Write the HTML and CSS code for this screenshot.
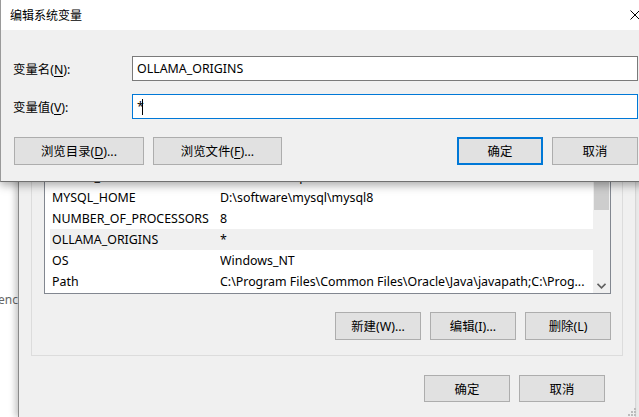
FILE: index.html
```html
<!DOCTYPE html>
<html lang="zh-CN">
<head>
<meta charset="utf-8">
<title>编辑系统变量</title>
<link rel="stylesheet" href="styles.css">
</head>
<body>
<div class="desktop">
  <div class="behind"><span class="behind-text">enc</span></div>
  <div class="envwin">
    <div class="group">
      <div class="list">
        <div class="rows">
          <div class="row"><span class="name">JAVA_HOME</span><span class="val">C:\Program Files\Java\jdk1.8.0</span></div>
          <div class="row"><span class="name">MAVEN_HOME</span><span class="val">D:\software\apache-maven</span></div>
          <div class="row"><span class="name">MYSQL_HOME</span><span class="val">D:\software\mysql\mysql8</span></div>
          <div class="row"><span class="name">NUMBER_OF_PROCESSORS</span><span class="val">8</span></div>
          <div class="row sel"><span class="name">OLLAMA_ORIGINS</span><span class="val">*</span></div>
          <div class="row"><span class="name">OS</span><span class="val">Windows_NT</span></div>
          <div class="row"><span class="name">Path</span><span class="val">C:\Program Files\Common Files\Oracle\Java\javapath;C:\Prog...</span></div>
        </div>
        <div class="scrollbar">
          <div class="sb-btn"></div>
          <div class="thumb"></div>
          <div class="track"></div>
          <div class="sb-btn">
            <svg width="9" height="6" viewBox="0 0 9 6"><path d="M0.5 0.8 L4.5 4.8 L8.5 0.8" fill="none" stroke="#606060" stroke-width="1.6"/></svg>
          </div>
        </div>
      </div>
      <div class="btnrow">
        <button class="btn">新建(W)...</button>
        <button class="btn">编辑(I)...</button>
        <button class="btn">删除(L)</button>
      </div>
    </div>
    <div class="footer">
      <button class="btn">确定</button>
      <button class="btn">取消</button>
    </div>
  </div>
  <div class="rest"></div>

  <svg class="grip" width="9" height="9" viewBox="0 0 9 9">
    <rect x="6" y="0" width="2" height="2" fill="#bcbcbc"/>
    <rect x="3" y="3" width="2" height="2" fill="#bcbcbc"/>
    <rect x="6" y="3" width="2" height="2" fill="#bcbcbc"/>
    <rect x="0" y="6" width="2" height="2" fill="#bcbcbc"/>
    <rect x="3" y="6" width="2" height="2" fill="#bcbcbc"/>
    <rect x="6" y="6" width="2" height="2" fill="#bcbcbc"/>
  </svg>

  <div class="dialog">
    <div class="titlebar">
      <span class="title">编辑系统变量</span>
      <span class="close">
        <svg width="10" height="10" viewBox="0 0 10 10"><path d="M0.5 0.5 L9.5 9.5 M9.5 0.5 L0.5 9.5" stroke="#000" stroke-width="1"/></svg>
      </span>
    </div>
    <div class="dbody">
      <div class="field">
        <label class="lbl">变量名(<u>N</u>):</label>
        <div class="input">OLLAMA_ORIGINS</div>
      </div>
      <div class="field second">
        <label class="lbl">变量值(<u>V</u>):</label>
        <div class="input focus">*<span class="caret"></span></div>
      </div>
      <div class="dbtns">
        <button class="btn wide">浏览目录(<u>D</u>)...</button>
        <button class="btn wide">浏览文件(<u>F</u>)...</button>
        <span class="spacer"></span>
        <button class="btn default">确定</button>
        <button class="btn">取消</button>
      </div>
    </div>
  </div>
</div>
</body>
</html>
```

FILE: styles.css
```css
* { box-sizing: border-box; }
html, body {
  margin: 0;
  padding: 0;
  width: 639px;
  height: 417px;
  overflow: hidden;
  background: #fff;
}
body {
  font-family: "Noto Sans", "Noto Sans CJK SC", sans-serif;
  font-size: 12.4px;
  color: #000;
}
u { text-decoration: underline; text-underline-offset: 2px; }

.desktop {
  position: relative;
  display: flex;
  width: 639px;
  height: 417px;
}

/* window further behind */
.behind {
  width: 18px;
  flex: none;
  background: #fff;
  position: relative;
}
.behind-text {
  position: absolute;
  top: 291px;
  left: -2px;
  color: #666;
  font-size: 12px;
}

/* environment variables window */
.envwin {
  width: 618px;
  flex: none;
  background: #f0f0f0;
  border-left: 1px solid #8a8a8a;
  border-right: 1px solid #d6d6d6;
  box-shadow: -3px 0 6px rgba(0, 0, 0, 0.22);
  padding: 132px 12px 0 12px;
  display: flex;
  flex-direction: column;
  position: relative;
  z-index: 1;
}
.rest {
  flex: 1;
  background: #ececec;
}

.group {
  border: 1px solid #dcdcdc;
  padding: 11px 11px 15px 12px;
}
.list {
  display: flex;
  border: 1px solid #828790;
  background: #fff;
  height: 150px;
}
.rows {
  flex: 1;
  min-width: 0;
  padding-left: 5px;
}
.row {
  display: flex;
  height: 21px;
  line-height: 21px;
  white-space: nowrap;
  overflow: hidden;
}
.row.sel { background: #f0f0f0; }
.name {
  width: 170px;
  flex: none;
  padding-left: 2px;
}
.val {
  flex: 1;
  overflow: hidden;
}
.scrollbar {
  width: 17px;
  flex: none;
  background: #f0f0f0;
  display: flex;
  flex-direction: column;
}
.sb-btn {
  height: 17px;
  display: flex;
  align-items: center;
  justify-content: center;
  padding-top: 3px;
}
.thumb {
  height: 48px;
  margin: 0 1px;
  background: #cdcdcd;
}
.track { flex: 1; }

.btn {
  font: inherit;
  color: #000;
  background: #e1e1e1;
  border: 1px solid #adadad;
  height: 28px;
  width: 86px;
  padding: 0;
  margin: 0;
  display: flex;
  align-items: center;
  justify-content: center;
  white-space: nowrap;
}
.btnrow {
  display: flex;
  justify-content: flex-end;
  gap: 9px;
  margin-top: 18px;
}
.footer {
  display: flex;
  justify-content: flex-end;
  gap: 9px;
  margin-top: 19px;
  padding-right: 18px;
}
.footer .btn { height: 27px; }

.grip {
  position: absolute;
  right: 2px;
  bottom: 0;
  z-index: 2;
}

/* front dialog */
.dialog {
  position: absolute;
  left: 0;
  top: 0;
  width: 657px;
  height: 182px;
  background: #f0f0f0;
  border-left: 1px solid #9a9a9a;
  border-right: 1px solid #9a9a9a;
  border-bottom: 1px solid #707070;
  box-shadow: 0 3px 9px rgba(0, 0, 0, 0.35);
  z-index: 5;
  display: flex;
  flex-direction: column;
}
.titlebar {
  height: 30px;
  flex: none;
  background: #fff;
  display: flex;
  align-items: center;
  padding-left: 9px;
}
.title {
  flex: 1;
  font-size: 12px;
}
.close {
  width: 42px;
  display: flex;
  justify-content: center;
  align-items: center;
}
.dbody {
  flex: 1;
  padding: 26px 18px 0 12px;
}
.field {
  display: flex;
  align-items: center;
  height: 25px;
}
.field.second { margin-top: 13px; }
.lbl {
  width: 119px;
  flex: none;
}
.input {
  flex: 1;
  height: 25px;
  background: #fff;
  border: 1px solid #7a7a7a;
  padding-left: 4px;
  line-height: 23px;
  display: flex;
  align-items: center;
}
.input.focus { border-color: #0078d7; }
.caret {
  display: inline-block;
  width: 1px;
  height: 16px;
  background: #000;
  margin-left: -2px;
}
.dbtns {
  display: flex;
  gap: 9px;
  margin-top: 18px;
}
.btn.wide { width: 129px; }
.dbtns .btn.wide:first-child { margin-left: 1px; width: 130px; }
.spacer { flex: 1; }
.btn.default { border: 2px solid #0078d7; }
```
